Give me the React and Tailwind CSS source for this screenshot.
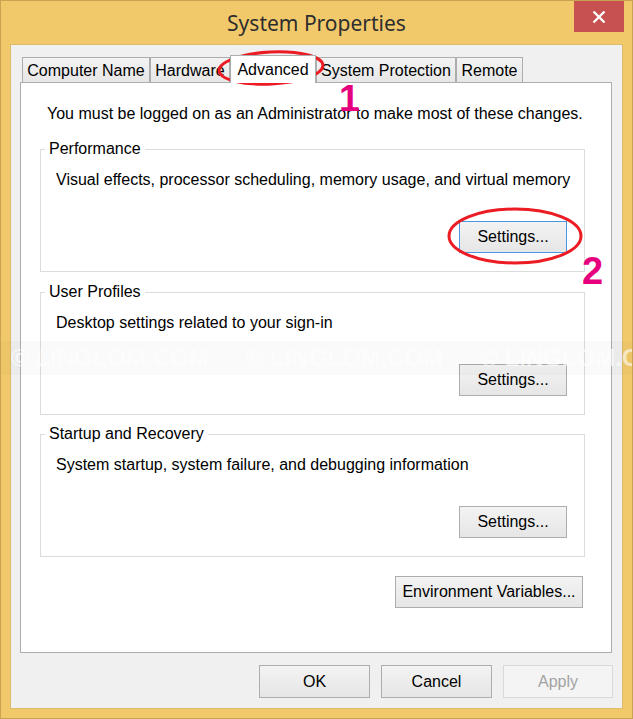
import React from 'react';

const Button = ({ children, className = '', focused = false, disabled = false }) => (
  <button
    type="button"
    className={
      'h-[32px] text-[16px] leading-[18px] ' +
      (disabled
        ? 'border border-[#D9D9D9] bg-[#F4F4F4] text-[#A3A3A3] '
        : focused
        ? 'border border-[#4A98E4] bg-linear-to-b from-[#F3F3F3] to-[#E6E6E6] text-black '
        : 'border border-[#ADADAD] bg-linear-to-b from-[#F3F3F3] to-[#E6E6E6] text-black ') +
      className
    }
  >
    {children}
  </button>
);

const GroupBox = ({ title, text, focused }) => (
  <div className="h-[123px] border border-[#DCDCDC]">
    <div className="-mt-[10px] ml-[4px] w-fit bg-white px-[4px] leading-[18px]">{title}</div>
    <p className="mt-[13px] pl-[15px] leading-[18px]">{text}</p>
    <div className="mt-[32px] flex justify-end pr-[17px]">
      <Button focused={focused} className="w-[108px]">
        Settings...
      </Button>
    </div>
  </div>
);

const tabs = [
  { label: 'Computer Name', w: 'w-[128px]' },
  { label: 'Hardware', w: 'w-[80px]' },
  { label: 'Advanced', w: 'w-[86px]', active: true },
  { label: 'System Protection', w: 'w-[140px]' },
  { label: 'Remote', w: 'w-[67px]' },
];

export default function App() {
  return (
    <div className="relative flex h-[719px] w-[633px] flex-col border border-[#C9A34F] bg-[#F1C96B] px-[9px] pb-[9px] font-['Liberation_Sans',Arial,sans-serif] text-[16px] text-black">
      {/* title bar */}
      <div className="grid h-[43px] shrink-0 grid-cols-[1fr_auto_1fr]">
        <div />
        <div className="pt-[8px] font-['Noto_Sans',sans-serif] text-[21px] leading-[28px] text-[#2E2E2E]">
          System Properties
        </div>
        <div className="flex justify-end">
          <div className="-mr-px flex h-[31px] w-[50px] items-center justify-center bg-[#C75050]">
            <svg width="14" height="14" viewBox="0 0 14 14">
              <path d="M1.5 1.5 L12.5 12.5 M12.5 1.5 L1.5 12.5" stroke="#fff" strokeWidth="2.4" />
            </svg>
          </div>
        </div>
      </div>

      {/* client */}
      <div className="flex flex-1 flex-col border border-[#DDBB6C] bg-[#F0F0F0] pt-[12px]">
        <div className="ml-[11px] flex h-[25px] items-end">
          {tabs.map((t) =>
            t.active ? (
              <div
                key={t.label}
                className={'relative z-10 -mb-px flex h-[28px] items-center justify-center border border-b-0 border-[#ADADAD] bg-white leading-[18px] ' + t.w}
              >
                {t.label}
              </div>
            ) : (
              <div
                key={t.label}
                className={'flex h-[25px] items-center justify-center border border-b-0 border-[#ADADAD] bg-linear-to-b from-[#F3F3F3] to-[#E7E7E7] pt-px leading-[18px] ' + t.w}
              >
                {t.label}
              </div>
            )
          )}
        </div>

        <div className="ml-[9px] mr-[10px] h-[571px] border border-[#ADADAD] bg-white pl-[19px] pr-[26px] pt-[22px]">
          <p className="ml-[7px] leading-[18px]">
            You must be logged on as an Administrator to make most of these changes.
          </p>
          <div className="mt-[26px]">
            <GroupBox
              title="Performance"
              text="Visual effects, processor scheduling, memory usage, and virtual memory"
              focused
            />
          </div>
          <div className="mt-[20px]">
            <GroupBox title="User Profiles" text="Desktop settings related to your sign-in" />
          </div>
          <div className="mt-[19px]">
            <GroupBox
              title="Startup and Recovery"
              text="System startup, system failure, and debugging information"
            />
          </div>
          <div className="mt-[19px] flex justify-end pr-[2px]">
            <Button className="w-[188px]">Environment Variables...</Button>
          </div>
        </div>

        <div className="mt-[12px] flex justify-end gap-[11px] pr-[9px]">
          <Button className="h-[33px] w-[111px]">OK</Button>
          <Button className="h-[33px] w-[111px]">Cancel</Button>
          <Button disabled className="h-[33px] w-[110px]">
            Apply
          </Button>
        </div>
      </div>

      {/* watermark */}
      <div className="pointer-events-none absolute left-0 right-0 top-[340px] flex h-[34px] items-center gap-[37px] overflow-hidden bg-black/[0.018] pl-[10px] text-[24px] font-bold leading-none text-white/60">
        <span className="shrink-0">© LINGLOM.COM</span>
        <span className="shrink-0">© LINGLOM.COM</span>
        <span className="shrink-0">© LINGLOM.COM</span>
      </div>

      {/* annotations */}
      <svg className="pointer-events-none absolute left-0 top-0" width="633" height="719">
        <ellipse cx="270" cy="67" rx="52" ry="16" fill="none" stroke="#EC1C24" strokeWidth="3" transform="rotate(-3 270 67)" />
        <ellipse cx="514" cy="235" rx="66" ry="27" fill="none" stroke="#EC1C24" strokeWidth="3" />
      </svg>
      <span className="pointer-events-none absolute left-[338px] top-[79px] text-[37px] font-bold leading-[37px] text-[#E6007E]">
        1
      </span>
      <span className="pointer-events-none absolute left-[581px] top-[251px] text-[38px] font-bold leading-[38px] text-[#E6007E]">
        2
      </span>
    </div>
  );
}
